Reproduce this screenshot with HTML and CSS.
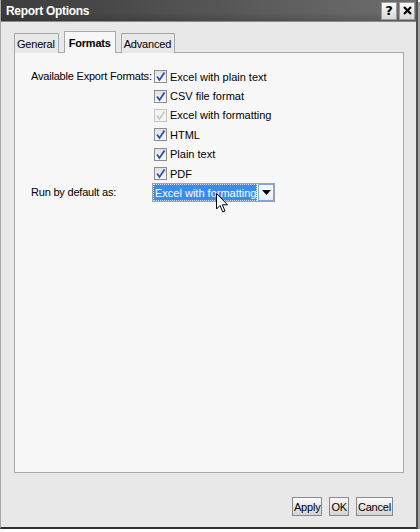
FILE: index.html
```html
<!DOCTYPE html>
<html lang="en">
<head>
    <meta charset="UTF-8">
    <title>Report Options</title>
    <link rel="stylesheet" href="styles.css">
</head>
<body>
    <div class="window">
        <!-- Title bar -->
        <div class="titlebar">
            <span class="title">Report Options</span>
            <div class="title-buttons">
                <span class="tb-btn">?</span>
                <span class="tb-btn">
                    <svg width="9" height="9" viewBox="0 0 9 9"><path d="M1 1L8 8M8 1L1 8" stroke="#000" stroke-width="2.2"/></svg>
                </span>
            </div>
        </div>

        <div class="content">
            <!-- Tabs -->
            <div class="tabs">
                <div class="tab">General</div>
                <div class="tab active">Formats</div>
                <div class="tab">Advanced</div>
            </div>

            <!-- Formats panel -->
            <div class="panel">
                <div class="form-row">
                    <div class="label">Available Export Formats:</div>
                    <div class="checks">
                        <label class="check"><span class="box"><svg viewBox="0 0 11 11"><path d="M2 5.5L4.5 9L9.5 1.5" /></svg></span>Excel with plain text</label>
                        <label class="check"><span class="box"><svg viewBox="0 0 11 11"><path d="M2 5.5L4.5 9L9.5 1.5" /></svg></span>CSV file format</label>
                        <label class="check disabled"><span class="box"><svg viewBox="0 0 11 11"><path d="M2 5.5L4.5 9L9.5 1.5" /></svg></span>Excel with formatting</label>
                        <label class="check"><span class="box"><svg viewBox="0 0 11 11"><path d="M2 5.5L4.5 9L9.5 1.5" /></svg></span>HTML</label>
                        <label class="check"><span class="box"><svg viewBox="0 0 11 11"><path d="M2 5.5L4.5 9L9.5 1.5" /></svg></span>Plain text</label>
                        <label class="check"><span class="box"><svg viewBox="0 0 11 11"><path d="M2 5.5L4.5 9L9.5 1.5" /></svg></span>PDF</label>
                    </div>
                </div>
                <div class="form-row default-row">
                    <div class="label">Run by default as:</div>
                    <div class="select">
                        <span class="select-value">Excel with formatting</span>
                        <span class="select-arrow">
                            <svg width="9" height="5" viewBox="0 0 9 5"><path d="M0 0H9L4.5 5Z" fill="#000"/></svg>
                        </span>
                        <!-- mouse pointer -->
                        <svg class="pointer" width="13" height="20" viewBox="0 0 13 20">
                            <path d="M0.5 0.5V16L4 12.5L6.8 19L9 18L6.3 11.8H11.5Z" fill="#fff" stroke="#000" stroke-width="1"/>
                        </svg>
                    </div>
                </div>
            </div>

            <!-- Dialog buttons -->
            <div class="footer">
                <button class="btn">Apply</button>
                <button class="btn">OK</button>
                <button class="btn">Cancel</button>
            </div>
        </div>
    </div>
</body>
</html>
```

FILE: styles.css
```css
/* Global styles */
body {
    margin: 0;
    padding: 0;
    background-color: #fff;
    font-family: "Liberation Sans", Arial, sans-serif;
    font-size: 11px;
    color: #000;
}

/* Dialog window */
.window {
    width: 415px;
    height: 527px;
    background-color: #e8e8e8;
    border-left: 1px solid #a8a8a8;
    border-right: 2px solid #505050;
    border-bottom: 2px solid #303030;
    box-shadow: 2px 2px 0 #a0a0a0;
    display: flex;
    flex-direction: column;
}

/* Title bar */
.titlebar {
    height: 21px;
    display: flex;
    align-items: center;
    justify-content: space-between;
    padding: 0 1px 0 5px;
    background: linear-gradient(to bottom, rgba(0, 0, 0, 0) 60%, rgba(0, 0, 0, 0.15)),
                linear-gradient(to right, #3c3c3c, #5a5a5a 60%, #6e6e6e);
    border-bottom: 1px solid #8a8a8a;
}

.title {
    color: #fff;
    font-weight: bold;
    font-size: 12px;
    letter-spacing: -0.3px;
}

.title-buttons {
    display: flex;
    gap: 2px;
}

.tb-btn {
    width: 14px;
    height: 16px;
    display: flex;
    align-items: center;
    justify-content: center;
    background: linear-gradient(#fafafa, #d8d8d8);
    border: 1px solid #9a9a9a;
    font-weight: bold;
    font-size: 13px;
    font-family: "DejaVu Sans", sans-serif;
}

/* Body of the dialog */
.content {
    flex: 1;
    display: flex;
    flex-direction: column;
    padding: 9px 12px 11px 13px;
}

/* Tabs */
.tabs {
    display: flex;
    align-items: flex-end;
    gap: 5px;
    margin-bottom: -1px;
    position: relative;
    z-index: 1;
}

.tab {
    height: 19px;
    padding: 0 3px 0 2px;
    display: flex;
    align-items: center;
    border: 1px solid #a8a8a8;
    border-bottom: none;
    background-color: #e8e8e8;
    letter-spacing: -0.2px;
}

.tab.active {
    height: 21px;
    padding: 0 4px;
    font-weight: bold;
    background-color: #f7f7f7;
}

/* Tab panel */
.panel {
    height: 421px;
    border: 1px solid #a8a8a8;
    background-color: #f7f7f7;
    padding: 14px 0 0 16px;
    box-sizing: border-box;
}

.form-row {
    display: flex;
}

.label {
    width: 123px;
    line-height: 19.4px;
    white-space: nowrap;
    letter-spacing: -0.2px;
}

.checks {
    display: flex;
    flex-direction: column;
}

.check {
    height: 19.4px;
    display: flex;
    align-items: center;
    gap: 3px;
}

.box {
    width: 11px;
    height: 11px;
    border: 1px solid #8c8c8c;
    background: linear-gradient(#e0e0e0, #fbfbfb);
    display: flex;
}

.box svg {
    width: 11px;
    height: 11px;
}

.box path {
    fill: none;
    stroke: #2a4fb8;
    stroke-width: 1.8;
}

.check.disabled .box {
    border-color: #c4c4c4;
    background: #f4f4f4;
}

.check.disabled .box path {
    stroke: #c8c8c8;
}

/* Dropdown */
.default-row .label {
    line-height: 19px;
}

.select {
    margin-left: -2px;
    height: 17px;
    display: flex;
    border: 1px solid #a0a0a0;
    background-color: #fff;
    position: relative;
}

.select-value {
    width: 104px;
    padding: 0 1px 0 2px;
    display: flex;
    align-items: center;
    background-color: #3a8ce8;
    color: #fff;
    outline: 1px dotted #d0e4ff;
    outline-offset: -1px;
    white-space: nowrap;
    overflow: hidden;
    box-sizing: border-box;
}

.select-arrow {
    width: 16px;
    margin-left: 1px;
    display: flex;
    align-items: center;
    justify-content: center;
    border: 1px solid #7aa8dc;
    background: linear-gradient(#ffffff, #e6eef8);
    box-sizing: border-box;
}

.pointer {
    position: absolute;
    left: 63px;
    top: 9px;
}

/* Dialog buttons */
.footer {
    margin-top: auto;
    display: flex;
    justify-content: flex-end;
    gap: 7px;
    padding-right: 11px;
}

.btn {
    height: 19px;
    padding: 0 1px;
    font-family: "Liberation Sans", Arial, sans-serif;
    font-size: 11px;
    letter-spacing: -0.2px;
    color: #000;
    background: linear-gradient(#fafafa, #d4d4d4);
    border: 1px solid #8a8a8a;
    border-radius: 0;
}
```
